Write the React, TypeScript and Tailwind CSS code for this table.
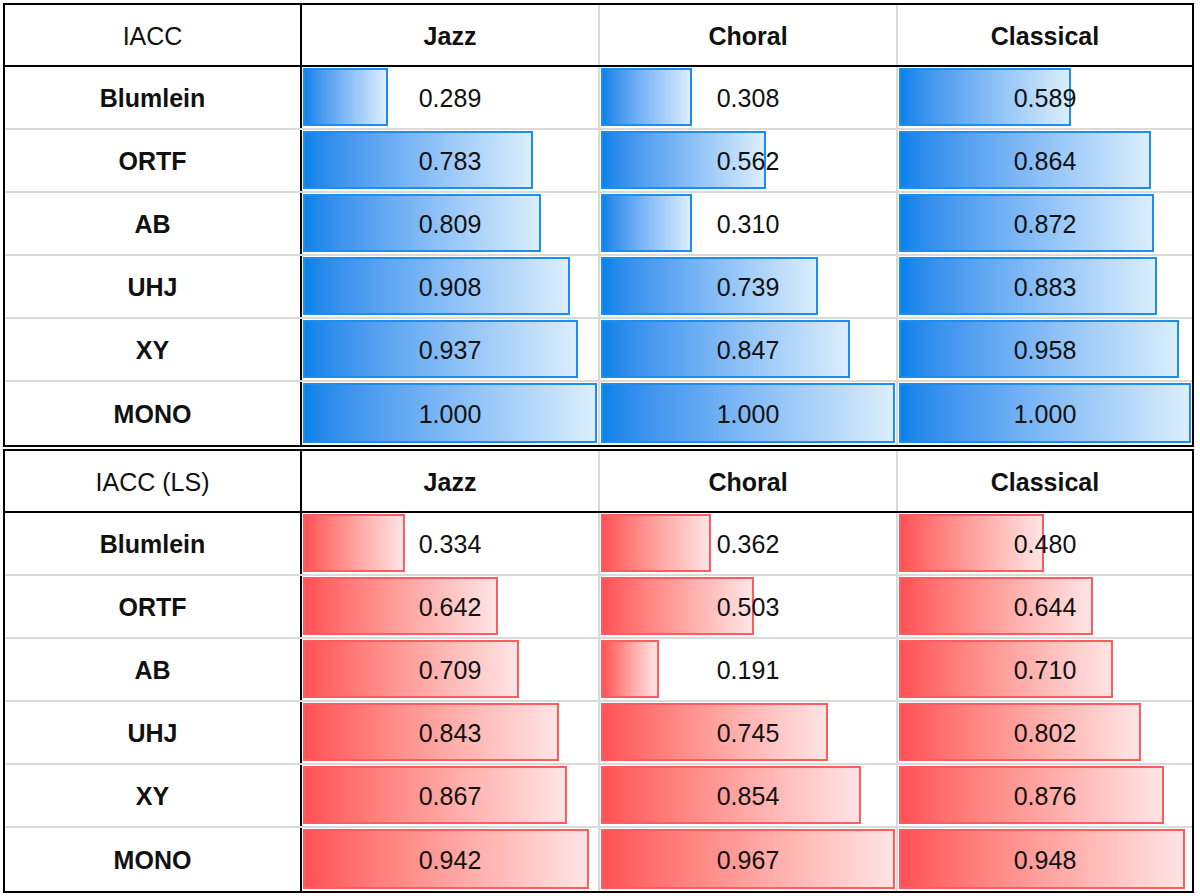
type Row = { name: string; values: number[] };

const genres = ["Jazz", "Choral", "Classical"];

const iacc: Row[] = [
  { name: "Blumlein", values: [0.289, 0.308, 0.589] },
  { name: "ORTF", values: [0.783, 0.562, 0.864] },
  { name: "AB", values: [0.809, 0.31, 0.872] },
  { name: "UHJ", values: [0.908, 0.739, 0.883] },
  { name: "XY", values: [0.937, 0.847, 0.958] },
  { name: "MONO", values: [1.0, 1.0, 1.0] },
];

const iaccLs: Row[] = [
  { name: "Blumlein", values: [0.334, 0.362, 0.48] },
  { name: "ORTF", values: [0.642, 0.503, 0.644] },
  { name: "AB", values: [0.709, 0.191, 0.71] },
  { name: "UHJ", values: [0.843, 0.745, 0.802] },
  { name: "XY", values: [0.867, 0.854, 0.876] },
  { name: "MONO", values: [0.942, 0.967, 0.948] },
];

// column widths in px: label, jazz, choral, classical
const cols = "grid grid-cols-[297px_298px_298px_294px]";

function Bar({ value, max, color }: { value: number; max: number; color: "blue" | "red" }) {
  const pct = (value / max) * 100;
  const cls =
    color === "blue"
      ? "h-full border-2 border-[#1b8ef0] bg-gradient-to-r from-[#0582ea] to-[#dbeefc]"
      : "h-full border-2 border-[#ff5c62] bg-gradient-to-r from-[#ff5055] to-[#ffe4e5]";
  return (
    <div className="absolute left-[1px] right-[1px] top-[1px] bottom-[2px]">
      <div className={cls} style={{ width: `${pct}%` }} />
    </div>
  );
}

function DataTable({ title, rows, max, color }: { title: string; rows: Row[]; max: number; color: "blue" | "red" }) {
  return (
    <div className="w-[1191px] border-2 border-black bg-white">
      {/* header */}
      <div className={`${cols} h-[62px] border-b-2 border-black`}>
        <div className="flex items-center justify-center border-r-2 border-black pt-[3px]">{title}</div>
        {genres.map((g, i) => (
          <div
            key={g}
            className={`flex items-center justify-center pt-[3px] font-bold ${i < 2 ? "border-r-2 border-[#dadada]" : ""}`}
          >
            {g}
          </div>
        ))}
      </div>

      {rows.map((r, ri) => (
        <div
          key={r.name}
          className={`${cols} h-[63px] ${ri < rows.length - 1 ? "border-b-2 border-[#dadada]" : "h-[61px]"}`}
        >
          <div className="flex items-center justify-center border-r-2 border-black pt-[3px] font-bold">{r.name}</div>
          {r.values.map((v, i) => (
            <div
              key={i}
              className={`relative flex items-center justify-center pt-[3px] ${i < 2 ? "border-r-2 border-[#dadada]" : ""}`}
            >
              <Bar value={v} max={max} color={color} />
              <span className="relative">{v.toFixed(3)}</span>
            </div>
          ))}
        </div>
      ))}
    </div>
  );
}

export default function App() {
  return (
    <div className="h-[896px] w-[1200px] bg-white pl-[3px] pt-[3px] font-['Liberation_Sans',Arial,sans-serif] text-[25px] text-[#111]">
      <DataTable title="IACC" rows={iacc} max={1} color="blue" />
      <div className="mt-[2px]">
        <DataTable title="IACC (LS)" rows={iaccLs} max={0.967} color="red" />
      </div>
    </div>
  );
}
